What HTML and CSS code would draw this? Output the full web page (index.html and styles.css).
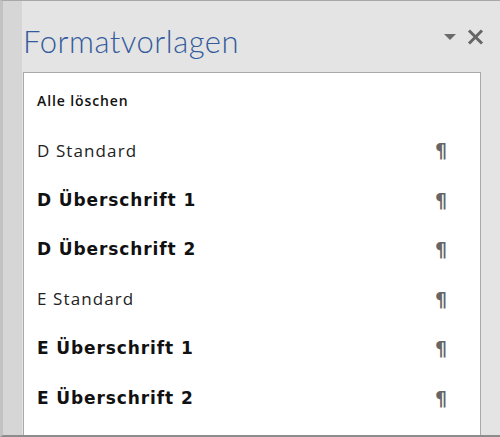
FILE: index.html
```html
<!DOCTYPE html>
<html lang="de">
<head>
<meta charset="utf-8">
<link rel="stylesheet" href="styles.css">
</head>
<body>
<div class="pane">
  <div class="header">
    <div class="title">Formatvorlagen</div>
    <div class="tools">
      <svg class="drop" width="14" height="8" viewBox="0 0 14 8"><polygon points="1,1 13,1 7,7" fill="#6b6b6b"/></svg>
      <svg class="close" width="17" height="16" viewBox="0 0 17 16"><path d="M2 1.5 L15 14.5 M15 1.5 L2 14.5" stroke="#666" stroke-width="3" fill="none"/></svg>
    </div>
  </div>
  <div class="list">
    <div class="row clear">Alle löschen</div>
    <div class="row"><span>D Standard</span><span class="pil">¶</span></div>
    <div class="row bold"><span>D Überschrift 1</span><span class="pil">¶</span></div>
    <div class="row bold"><span>D Überschrift 2</span><span class="pil">¶</span></div>
    <div class="row"><span>E Standard</span><span class="pil">¶</span></div>
    <div class="row bold"><span>E Überschrift 1</span><span class="pil">¶</span></div>
    <div class="row bold"><span>E Überschrift 2</span><span class="pil">¶</span></div>
  </div>
</div>
</body>
</html>
```
FILE: styles.css
```css
html, body {
  margin: 0;
  padding: 0;
}
body {
  width: 500px;
  height: 437px;
  overflow: hidden;
  background: #e4e4e4;
}
.pane {
  box-sizing: border-box;
  width: 500px;
  height: 437px;
  border-top: 1px solid #a8a8a8;
  border-left: 3px solid #c2c2c2;
  border-bottom: 2px solid #8c8c8c;
  background: linear-gradient(to right, #d6d6d6 0, #d6d6d6 19px, #e4e4e4 19px);
  display: flex;
  flex-direction: column;
  padding-left: 20px;
  padding-right: 19px;
}
.header {
  height: 71px;
  display: flex;
  align-items: flex-start;
  justify-content: space-between;
}
.title {
  font-family: "Lato", sans-serif;
  font-weight: 300;
  font-size: 31px;
  letter-spacing: 0.5px;
  line-height: 36px;
  color: #335b9c;
  margin-top: 22px;
  margin-left: 0;
}
.tools {
  display: flex;
  align-items: center;
  gap: 10px;
  margin-top: 28px;
  margin-right: -3px;
}
.drop {
  display: block;
  margin-top: -1px;
}
.close {
  display: block;
}
.list {
  flex: 1;
  background: #ffffff;
  border: 1px solid #a9a9a9;
  border-bottom: none;
  padding-top: 3px;
}
.row {
  height: 49.5px;
  display: flex;
  align-items: center;
  justify-content: space-between;
  padding-left: 13px;
  padding-right: 33px;
  font-family: "Open Sans", sans-serif;
  font-size: 17px;
  letter-spacing: 1.1px;
  color: #222;
}
.row.clear {
  font-size: 14px;
  font-weight: 600;
  letter-spacing: 0.9px;
  color: #111;
}
.row.bold {
  font-family: "DejaVu Sans", sans-serif;
  font-weight: bold;
  font-size: 17px;
  letter-spacing: 0.9px;
  color: #111;
}
.pil {
  font-family: "DejaVu Sans", sans-serif;
  font-weight: bold;
  font-size: 19px;
  letter-spacing: 0;
  color: #666;
}
```
